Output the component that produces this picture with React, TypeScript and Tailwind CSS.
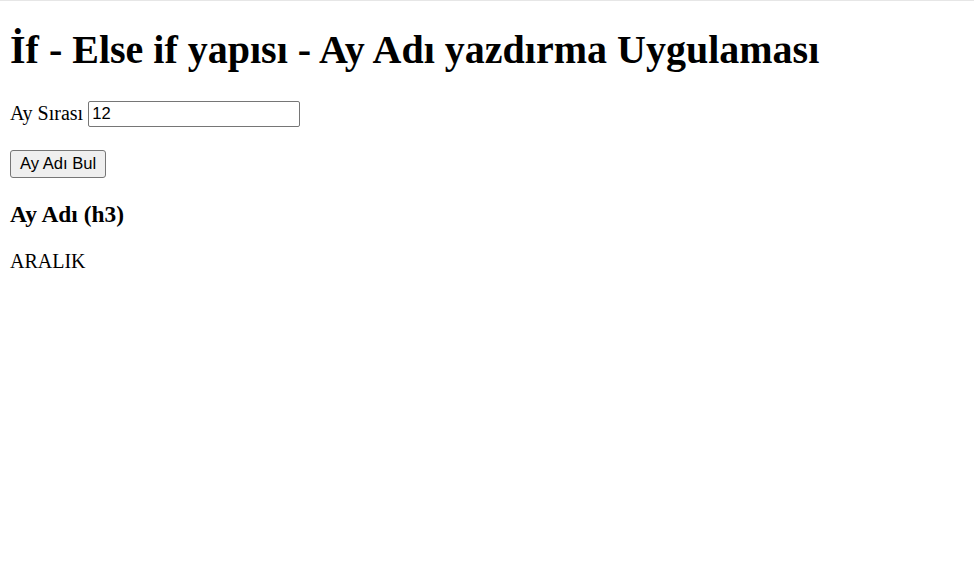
import React from "react";

export default function App() {
  return (
    <div className="min-h-[572px] bg-white border-t border-[#e6e6e6] text-black" style={{ fontFamily: '"Liberation Serif", "Times New Roman", serif' }}>
      <div className="px-[10px] pt-[26px]">
        <h1 className="text-[40px] font-bold leading-[46px] m-0">İf - Else if yapısı - Ay Adı yazdırma Uygulaması</h1>
        <p className="mt-[27px] text-[20px] leading-[27px] flex items-center">
          <span>Ay Sırası</span>
          <input
            type="text"
            defaultValue="12"
            className="ml-[5px] w-[212px] h-[26px] border border-[#767676] rounded-[2px] px-[3px] text-[16.6px] text-black outline-none"
            style={{ fontFamily: '"Liberation Sans", Arial, sans-serif' }}
          />
        </p>
        <p className="mt-[23px] flex">
          <button
            className="h-[28px] px-[9px] border border-[#767676] rounded-[3px] bg-[#efefef] text-[16.6px] text-black leading-none"
            style={{ fontFamily: '"Liberation Sans", Arial, sans-serif' }}
          >
            Ay Adı Bul
          </button>
        </p>
        <h3 className="mt-[23px] text-[23.4px] font-bold leading-[27px]">Ay Adı (h3)</h3>
        <p className="mt-[22px] text-[20px] leading-[23px]">ARALIK</p>
      </div>
    </div>
  );
}
